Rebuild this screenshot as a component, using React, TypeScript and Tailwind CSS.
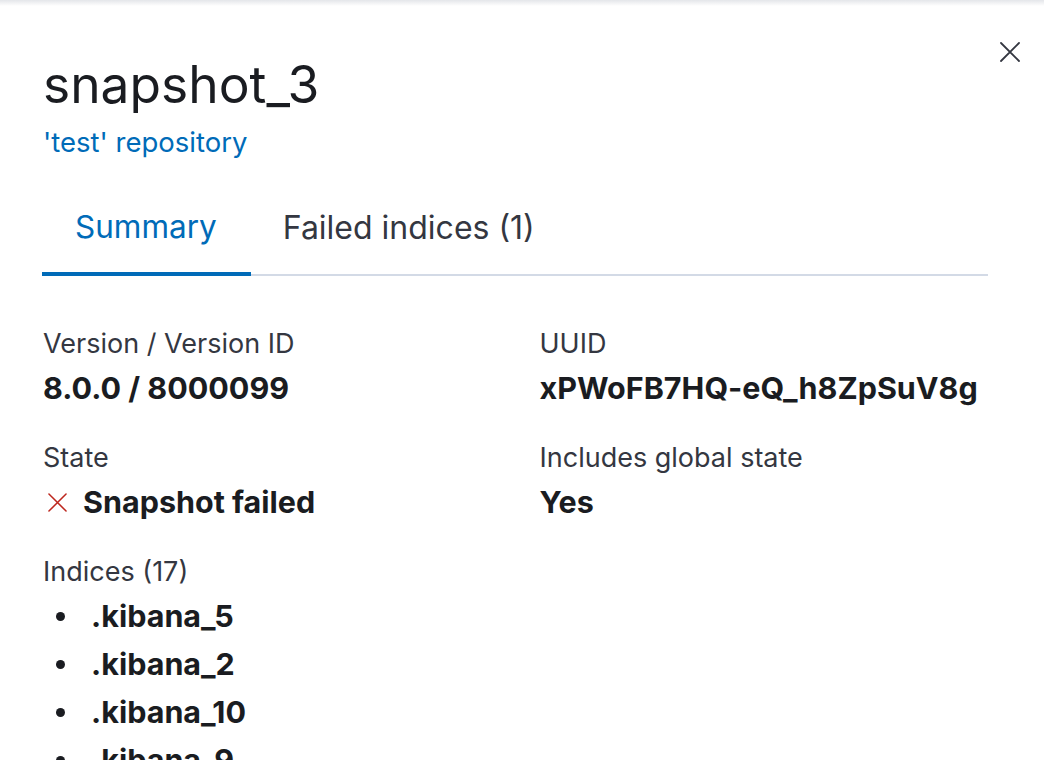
const indices = ['.kibana_5', '.kibana_2', '.kibana_10', '.kibana_9', '.kibana_1'];

function Cross({ className, width = 2 }: { className?: string; width?: number }) {
  return (
    <svg viewBox="0 0 20 20" className={className} fill="none" stroke="currentColor" strokeWidth={width} strokeLinecap="round">
      <path d="M1 1L19 19M19 1L1 19" />
    </svg>
  );
}

function Field({ label, children }: { label: string; children: React.ReactNode }) {
  return (
    <div>
      <div className="text-[27px] leading-[40px] text-[#343741]">{label}</div>
      <div className="mt-[2px] whitespace-nowrap text-[30.5px] leading-[44px] font-bold text-[#1a1c21]">{children}</div>
    </div>
  );
}

export default function App() {
  return (
    <div className="relative w-[1044px] h-[760px] overflow-hidden bg-white font-['Inter',sans-serif] text-[#343741]">
      <div className="absolute inset-x-0 top-0 h-[6px] bg-gradient-to-b from-[#e4e6ea] to-white" />
      <button className="absolute top-[42px] left-[1000px] w-[20px] h-[20px] text-[#343741]">
        <Cross className="w-[20px] h-[20px]" width={1.8} />
      </button>

      <div className="pl-[42px] pr-[56px] pt-[51px]">
        <h1 className="pl-[1px] text-[51.5px] leading-[66px] text-[#1a1c21] font-normal">snapshot_3</h1>
        <a className="block pl-[1px] mt-[5px] text-[27.5px] leading-[40px] text-[#006bb8]">'test' repository</a>

        <div className="mt-[25px] flex border-b-2 border-[#d3dae6]">
          <button className="-mb-[2px] pl-[33px] pr-[34px] pt-[20px] pb-[25px] text-[31.5px] leading-[40px] text-[#006bb8] border-b-4 border-[#006bb8]">
            Summary
          </button>
          <button className="px-[32px] pt-[20px] pb-[25px] text-[32px] leading-[40px] text-[#343741]">
            Failed indices (1)
          </button>
        </div>

        <div className="mt-[48px] pl-[1px] grid grid-cols-2 gap-x-[48px] gap-y-[28px]">
          <Field label="Version / Version ID">8.0.0 / 8000099</Field>
          <Field label="UUID">xPWoFB7HQ-eQ_h8ZpSuV8g</Field>
          <Field label="State">
            <span className="flex items-center gap-[16px]">
              <Cross className="w-[19px] h-[19px] ml-[5px] text-[#bd271e]" width={1.6} />
              Snapshot failed
            </span>
          </Field>
          <Field label="Includes global state">Yes</Field>
          <div className="col-span-2">
            <div className="text-[27px] leading-[40px] text-[#343741]">Indices (17)</div>
            <ul className="text-[30.5px] leading-[48px] font-bold text-[#1a1c21]">
              {indices.map((name) => (
                <li key={name} className="flex items-center">
                  <span className="ml-[13px] mr-[26px] w-[9px] h-[9px] rounded-full bg-[#1a1c21]" />
                  {name}
                </li>
              ))}
            </ul>
          </div>
        </div>
      </div>
    </div>
  );
}
